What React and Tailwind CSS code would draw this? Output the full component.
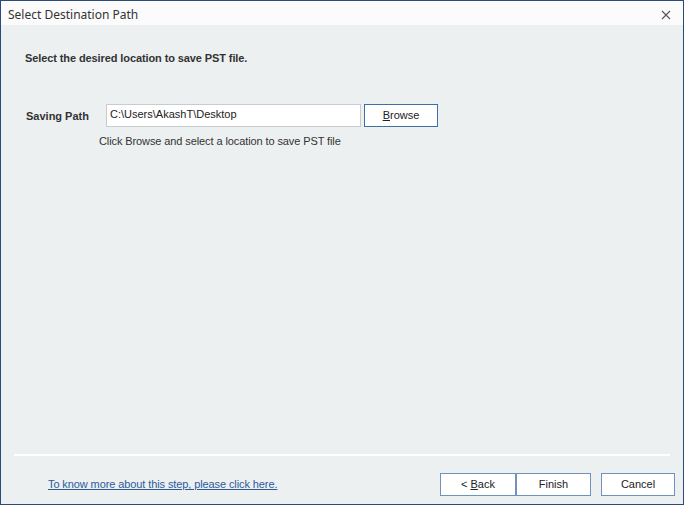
export default function App() {
  return (
    <div className="flex h-[505px] w-[684px] flex-col border border-[#2b4a78] bg-[#ecf0f1] font-['Liberation_Sans',Arial,sans-serif] text-[#222]">
      <div className="flex h-[24px] items-center justify-between bg-[#fbfbfb] pl-[7px] pr-[12px] pt-[3px] font-['Noto_Sans',sans-serif] text-[12px] text-[#333]">
        <span>Select Destination Path</span>
        <svg width="10" height="10" viewBox="0 0 10 10" className="text-[#555]">
          <path d="M1 1 L9 9 M9 1 L1 9" stroke="currentColor" strokeWidth="1.1" />
        </svg>
      </div>

      <div className="flex flex-1 flex-col">
        <p className="mt-[25px] pl-[24px] text-[11px] font-bold tracking-[-0.1px] text-[#333]">
          Select the desired location to save PST file.
        </p>

        <div className="mt-[37px] flex items-center pl-[25px]">
          <span className="mt-[3px] w-[80px] text-[11px] font-bold text-[#333]">
            Saving Path
          </span>
          <div className="flex h-[23px] w-[255px] items-center border border-[#c9ccce] bg-white px-[3px] pb-[2px] text-[11px] text-[#222]">
            C:\Users\AkashT\Desktop
          </div>
          <button className="ml-[3px] h-[23px] w-[74px] border border-[#3d6ea5] bg-white text-[11px] text-[#222]">
            <span className="underline">B</span>rowse
          </button>
        </div>

        <p className="mt-[6px] pl-[98px] text-[11px] tracking-[-0.1px] text-[#333]">
          Click Browse and select a location to save PST file
        </p>

        <div className="flex-1" />

        <div className="mx-[13px] h-[2px] bg-white" />

        <div className="flex items-center pb-[8px] pt-[17px]">
          <a className="ml-[47px] text-[11px] tracking-[-0.1px] text-[#2d5b9a] underline">
            To know more about this step, please click here.
          </a>
          <div className="ml-auto mr-[8px] flex">
            <button className="h-[23px] w-[76px] border border-[#6f93bd] bg-white text-[11px] text-[#222]">
              &lt; <span className="underline">B</span>ack
            </button>
            <button className="h-[23px] w-[75px] border border-[#6f93bd] bg-white text-[11px] text-[#222]">
              Finish
            </button>
            <button className="ml-[10px] h-[23px] w-[74px] border border-[#6f93bd] bg-white text-[11px] text-[#222]">
              Cancel
            </button>
          </div>
        </div>
      </div>
    </div>
  );
}
